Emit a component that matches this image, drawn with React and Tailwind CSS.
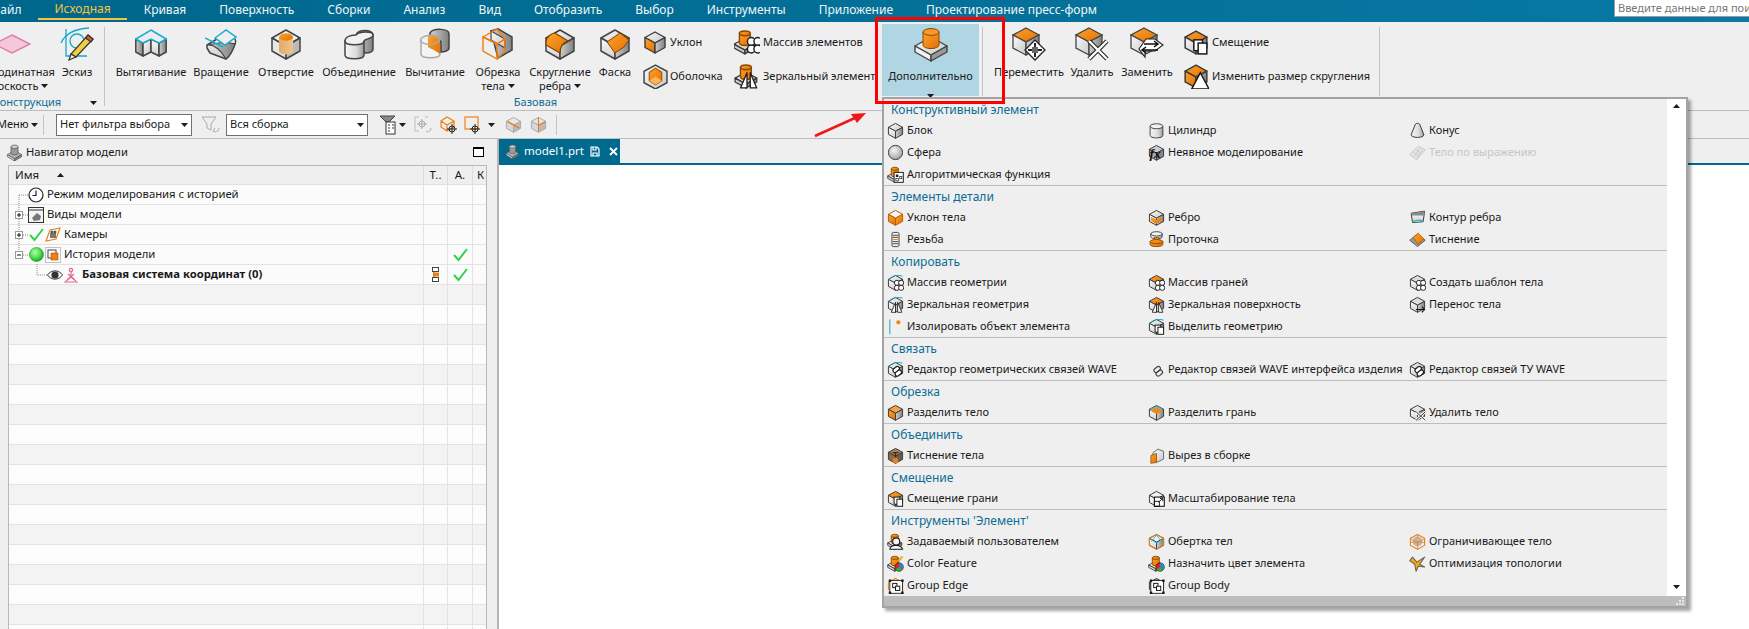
import React from 'react';

const STROKE = '#3c3c3c';

function Ico({ s = 16, w = 24, h = 24, children }) {
    return (
        <svg width={s} height={(s * h) / w} viewBox={`0 0 ${w} ${h}`} className="block shrink-0">
            {children}
        </svg>
    );
}

function Caret({ up = false }) {
    return (
        <svg width="7" height="4" viewBox="0 0 7 4" className="inline-block shrink-0">
            <polygon points={up ? '3.5,0 7,4 0,4' : '0,0 7,0 3.5,4'} fill="#1c1c1c" />
        </svg>
    );
}

// common drawing parts, all in a 24x24 grid
const Cube = ({ top = 'url(#gTop)', left = 'url(#gLeft)', right = 'url(#gRight)', stroke = STROKE, sw = 1.4 }) => (
    <g stroke={stroke} strokeWidth={sw} strokeLinejoin="round">
        <polygon points="12,2 22,7.5 12,13 2,7.5" fill={top} />
        <polygon points="2,7.5 12,13 12,23 2,17.5" fill={left} />
        <polygon points="22,7.5 12,13 12,23 22,17.5" fill={right} />
    </g>
);

const OrangeCube = () => <Cube top="url(#gOrange)" left="url(#gTop)" right="url(#gRight)" />;

const Cylinder = ({ fill = 'url(#gCyl)', x = 12, y = 5, rx = 8, ry = 3, h = 14, stroke = STROKE }) => (
    <g stroke={stroke} strokeWidth="1.3">
        <path d={`M${x - rx} ${y} V${y + h} A${rx} ${ry} 0 0 0 ${x + rx} ${y + h} V${y} Z`} fill={fill} />
        <ellipse cx={x} cy={y} rx={rx} ry={ry} fill={fill === 'url(#gCyl)' ? '#f2f2f2' : 'url(#gOrange)'} />
    </g>
);

const Plate = () => (
    <g stroke={STROKE} strokeWidth="1.2" strokeLinejoin="round">
        <polygon points="1,14 11,8.5 21,14 11,19.5" fill="url(#gTop)" />
        <polygon points="1,14 11,19.5 11,23 1,17.5" fill="#cfcfcf" />
        <polygon points="21,14 11,19.5 11,23 21,17.5" fill="#8f8f8f" />
    </g>
);

// grey part with a boss, used for the navigator and the model tab
const PartIcon = () => (
    <g stroke="#555" strokeWidth="1" strokeLinejoin="round">
        <polygon points="2,15 12,9 22,15 12,21" fill="#b5b5b5" />
        <polygon points="2,15 12,21 12,24 2,18" fill="#d8d8d8" />
        <polygon points="22,15 12,21 12,24 22,18" fill="#808080" />
        <path d="M7 4 V13 A5 2.5 0 0 0 17 13 V4 Z" fill="#9a9a9a" />
        <ellipse cx="12" cy="4" rx="5" ry="2.5" fill="#cfcfcf" />
    </g>
);

const Boss = () => (
    <>
        <Plate />
        <Cylinder fill="url(#gOrange)" x={11} y={4} rx={5} ry={2.2} h={9} stroke="#8a4a00" />
    </>
);

const Circles = () => (
    <g fill="#fff" stroke="#1c1c1c" strokeWidth="1.3">
        <circle cx="14" cy="12.5" r="3.6" />
        <circle cx="20" cy="12.5" r="3.6" />
        <circle cx="14" cy="19.5" r="3.6" />
        <circle cx="20" cy="19.5" r="3.6" />
    </g>
);

const Mirror = () => (
    <g fill="#fff" stroke="#1c1c1c" strokeWidth="1.2" strokeLinejoin="round">
        <polygon points="12,9 12,23 6,23" />
        <polygon points="15,9 15,23 21,23" />
    </g>
);

const Doc = () => (
    <g fill="#fff" stroke="#1c1c1c" strokeWidth="1.4">
        <rect x="10" y="10" width="8" height="10" />
        <rect x="14" y="13" width="8" height="10" />
    </g>
);

const Wave = () => <path d="M2 8 C8 2 15 1 22 3" fill="none" stroke="#17a9c9" strokeWidth="1.4" />;

const Chain = ({ color = '#1c1c1c', fill = '#fff' }) => (
    <g fill="none" stroke={color} strokeWidth="1.6">
        <rect x="8" y="9" width="10" height="6" rx="3" transform="rotate(-40 13 12)" fill={fill} />
        <rect x="11" y="14" width="10" height="6" rx="3" transform="rotate(-40 16 17)" fill={fill} />
    </g>
);

const Pie = () => (
    <g>
        <circle cx="17" cy="17" r="6" fill="#e02020" stroke="#222" strokeWidth="1" />
        <path d="M17 17 L17 11 A6 6 0 0 1 22 20 Z" fill="#2f7fe0" />
        <path d="M17 17 L22 20 A6 6 0 0 1 12 20 Z" fill="#27b13a" />
    </g>
);

const GroupBox = () => (
    <g>
        <rect x="4" y="5" width="18" height="18" fill="#fff" stroke="#1c1c1c" strokeWidth="1.2" />
        <g fill="#1c1c1c">
            <rect x="2.5" y="3.5" width="3.5" height="3.5" />
            <rect x="20" y="3.5" width="3.5" height="3.5" />
            <rect x="2.5" y="20.5" width="3.5" height="3.5" />
            <rect x="20" y="20.5" width="3.5" height="3.5" />
        </g>
        <rect x="8" y="9" width="6" height="6" fill="none" stroke="#1c1c1c" strokeWidth="1.4" />
        <rect x="12" y="13" width="6" height="6" fill="#fff" stroke="#1c1c1c" strokeWidth="1.4" />
    </g>
);

const WireHex = ({ color = '#ee7f12' }) => (
    <g fill="none" stroke={color} strokeWidth="1.5" strokeLinejoin="round">
        <polygon points="12,2 22,7.5 22,17.5 12,23 2,17.5 2,7.5" />
    </g>
);

const MENU_ICONS = {
    block: <Cube />,
    cylinder: <Cylinder y={6} rx={9} ry={3.5} h={13} />,
    cone: <path d="M9 3 C10 1.5 14 1.5 15 3 L21 18 C21 23 3 23 3 18 Z" fill="url(#gCyl)" stroke={STROKE} strokeWidth="1.4" />,
    sphere: <circle cx="12" cy="12" r="10" fill="url(#gBall)" stroke={STROKE} strokeWidth="1.4" />,
    fx: (
        <>
            <Cube top="#ccc" left="#aaa" right="#888" />
            <text x="2" y="20" fontFamily="Liberation Serif" fontStyle="italic" fontWeight="700" fontSize="19" fill="#111">fx</text>
        </>
    ),
    mesh: (
        <g fill="#e6e6e6" stroke="#c4c4c4" strokeWidth="1.2">
            <polygon points="13,3 23,8 11,22 1,15" />
            <path d="M9 7 L17 13 M5 11 L14 17 M16 5 L7 18 M20 7 L11 20" fill="none" />
        </g>
    ),
    algo: (
        <>
            <Boss />
            <rect x="10" y="9" width="13" height="14" fill="#fff" stroke="#111" strokeWidth="1.3" />
            <rect x="12.5" y="12" width="3.5" height="3.5" fill="#222" />
            <rect x="12.5" y="17.5" width="3.5" height="3.5" fill="none" stroke="#222" />
            <rect x="18" y="15" width="3" height="3" fill="none" stroke="#222" />
        </>
    ),
    draft: <Cube top="#f6f6f6" left="url(#gOrange)" right="url(#gOrange)" stroke="#b85f00" />,
    rib: (
        <>
            <Cube />
            <polygon points="4,11 12,15 20,11 20,16 12,21 4,16" fill="url(#gOrange)" />
        </>
    ),
    contour: (
        <>
            <polygon points="3,6 22,3 20,18 5,19" fill="url(#gLeft)" stroke={STROKE} strokeWidth="1.4" />
            <polygon points="3,6 22,3 21,9 5,9" fill="#8a8a8a" />
            <path d="M5 18 Q13 14 20 17" stroke="#2fb5d3" strokeWidth="1.8" fill="#cfeaf2" />
        </>
    ),
    thread: (
        <g stroke={STROKE} strokeWidth="1.3">
            <rect x="7" y="2" width="10" height="20" rx="2" fill="#f3f3f3" />
            <path d="M8 6 H16 M8 9 H16 M8 15 H16 M8 18 H16" />
            <path d="M8 12 H16" stroke="#ee7f12" />
        </g>
    ),
    groove: (
        <>
            <Cylinder y={4} rx={8} ry={3} h={4} />
            <rect x="9" y="9" width="6" height="5" fill="#f18a1d" stroke="#8a4a00" />
            <Cylinder fill="url(#gOrange)" y={15} rx={9} ry={3} h={4} stroke="#8a4a00" />
        </>
    ),
    emboss: (
        <>
            <polygon points="1,13 11,5 23,13 12,22" fill="#999" stroke={STROKE} />
            <polygon points="6,9 13,3 21,11 13,19" fill="url(#gOrange)" stroke="#a85400" />
        </>
    ),
    patGeom: (
        <>
            <Cube />
            <Wave />
            <Circles />
        </>
    ),
    patFace: (
        <>
            <OrangeCube />
            <Circles />
        </>
    ),
    patBody: (
        <>
            <Cube top="#ddd" />
            <Circles />
        </>
    ),
    mirGeom: (
        <>
            <Cube />
            <Wave />
            <Mirror />
        </>
    ),
    mirFace: (
        <>
            <OrangeCube />
            <Mirror />
        </>
    ),
    transfer: (
        <>
            <Cube top="#ddd" />
            <path d="M10 19 H22 M18 15 L22 19 L18 23" fill="none" stroke="#111" strokeWidth="1.6" />
        </>
    ),
    isolate: (
        <>
            <path d="M4 2 V23" stroke="#14a5c6" strokeWidth="1.4" />
            <circle cx="16" cy="6" r="3" fill="#f08a1d" />
        </>
    ),
    extract: (
        <>
            <Cube />
            <Wave />
            <Doc />
        </>
    ),
    waveGeom: (
        <>
            <Cube />
            <Wave />
            <Chain />
        </>
    ),
    waveIface: <Chain color="#444" fill="none" />,
    waveTu: (
        <>
            <Cube top="#ddd" />
            <Chain />
        </>
    ),
    split: <Cube top="#f6a341" left="url(#gOrange)" right="url(#gRight)" />,
    splitFace: (
        <>
            <Cube />
            <polygon points="3,9 12,4 21,9 12,14" fill="#f18a1d" />
            <path d="M3 8 L12 3 L21 8" fill="none" stroke="#25afd0" strokeWidth="1.6" />
        </>
    ),
    deleteBody: (
        <>
            <Cube />
            <path d="M10 11 L23 23 M23 11 L10 23" stroke="#fff" strokeWidth="3.6" />
            <path d="M10 11 L23 23 M23 11 L10 23" stroke="#222" strokeWidth="1.3" />
        </>
    ),
    emboss2: (
        <>
            <Cube top="#a5835f" left="#8a6a4a" right="#6f5a45" />
            <circle cx="12" cy="19" r="4" fill="#e8801b" />
            <path d="M8 8 H16 M12 8 V14" stroke="#3a2a1a" strokeWidth="1.6" />
        </>
    ),
    cut: (
        <>
            <polygon points="7,8 14,3 22,6 22,17 14,21 7,20" fill="url(#gTop)" stroke={STROKE} />
            <polygon points="4,12 12,9 12,22 4,23" fill="url(#gOrange)" stroke="#8a4a00" />
        </>
    ),
    offsetFace: (
        <>
            <OrangeCube />
            <Doc />
        </>
    ),
    scale: (
        <>
            <Cube top="#f2f2f2" left="#f2f2f2" right="#d6d6d6" />
            <rect x="9" y="10" width="14" height="13" fill="#fff" stroke="#111" strokeWidth="1.5" />
            <rect x="9" y="16" width="7" height="7" fill="none" stroke="#111" strokeWidth="1.3" />
            <path d="M15 17 L21 12 M17 12 H21 V16" fill="none" stroke="#111" strokeWidth="1.3" />
        </>
    ),
    user: (
        <>
            <Boss />
            <circle cx="13" cy="12" r="5" fill="#f4f4f4" stroke="#111" strokeWidth="1.5" />
            <path d="M4 23 C5 16 20 16 22 23 Z" fill="#fff" stroke="#111" strokeWidth="1.5" />
        </>
    ),
    wrap: (
        <>
            <Cube top="#f2f2f2" />
            <path d="M2 8 L12 14 L22 8 M12 3 L5 12 M12 3 L19 12" fill="none" stroke="#2fb5d3" strokeWidth="1.3" />
            <WireHex />
        </>
    ),
    bounding: (
        <>
            <circle cx="12" cy="12" r="7" fill="#b9b9b9" />
            <path d="M2 8 L12 13 L22 8 M12 13 V23 M2 13 H22 M12 2 V8" fill="none" stroke="#ee7f12" strokeWidth="1.1" />
            <WireHex />
        </>
    ),
    colorFeat: (
        <>
            <Boss />
            <path d="M16 9 L22 2" stroke="#e2b41f" strokeWidth="3" />
            <Pie />
        </>
    ),
    colorAssign: (
        <>
            <Boss />
            <Pie />
        </>
    ),
    topo: <path d="M5 3 L11 10 L22 3 L15 13 L22 17 L13 16 L10 23 L8 13 L1 8 Z" fill="#f5a816" stroke="#665" strokeWidth="1.5" strokeLinejoin="round" />,
    groupEdge: (
        <>
            <WireHex />
            <GroupBox />
        </>
    ),
    groupBody: (
        <>
            <Cube top="#d58a2e" left="#999" right="#777" />
            <GroupBox />
        </>
    ),
};

const MENU = [
    {
        title: 'Конструктивный элемент',
        rows: [
            [['block', 'Блок'], ['cylinder', 'Цилиндр'], ['cone', 'Конус']],
            [['sphere', 'Сфера'], ['fx', 'Неявное моделирование'], ['mesh', 'Тело по выражению', true]],
            [['algo', 'Алгоритмическая функция']],
        ],
    },
    {
        title: 'Элементы детали',
        rows: [
            [['draft', 'Уклон тела'], ['rib', 'Ребро'], ['contour', 'Контур ребра']],
            [['thread', 'Резьба'], ['groove', 'Проточка'], ['emboss', 'Тиснение']],
        ],
    },
    {
        title: 'Копировать',
        rows: [
            [['patGeom', 'Массив геометрии'], ['patFace', 'Массив граней'], ['patBody', 'Создать шаблон тела']],
            [['mirGeom', 'Зеркальная геометрия'], ['mirFace', 'Зеркальная поверхность'], ['transfer', 'Перенос тела']],
            [['isolate', 'Изолировать объект элемента'], ['extract', 'Выделить геометрию']],
        ],
    },
    {
        title: 'Связать',
        rows: [[['waveGeom', 'Редактор геометрических связей WAVE'], ['waveIface', 'Редактор связей WAVE интерфейса изделия'], ['waveTu', 'Редактор связей ТУ WAVE']]],
    },
    {
        title: 'Обрезка',
        rows: [[['split', 'Разделить тело'], ['splitFace', 'Разделить грань'], ['deleteBody', 'Удалить тело']]],
    },
    {
        title: 'Объединить',
        rows: [[['emboss2', 'Тиснение тела'], ['cut', 'Вырез в сборке']]],
    },
    {
        title: 'Смещение',
        rows: [[['offsetFace', 'Смещение грани'], ['scale', 'Масштабирование тела']]],
    },
    {
        title: "Инструменты 'Элемент'",
        rows: [
            [['user', 'Задаваемый пользователем'], ['wrap', 'Обертка тел'], ['bounding', 'Ограничивающее тело']],
            [['colorFeat', 'Color Feature'], ['colorAssign', 'Назначить цвет элемента'], ['topo', 'Оптимизация топологии']],
            [['groupEdge', 'Group Edge'], ['groupBody', 'Group Body']],
        ],
    },
];

// big ribbon pictures, 32x32
const Big = ({ children }) => <Ico s={32} w={32} h={32}>{children}</Ico>;

const HexBig = ({ top = 'url(#gTop)', left = 'url(#gLeft)', right = 'url(#gRight)' }) => (
    <g stroke="#444" strokeWidth="1.5" strokeLinejoin="round">
        <polygon points="16,2 30,10 16,18 2,10" fill={top} />
        <polygon points="2,10 16,18 16,31 2,23" fill={left} />
        <polygon points="30,10 16,18 16,31 30,23" fill={right} />
    </g>
);

const PlaneIcon = () => (
    <div className="mr-[10px]">
        <Ico s={38} w={38} h={20}>
            <polygon points="19,1 37,10 19,19 1,10" fill="#f6c6da" stroke="#df7fa3" strokeWidth="1.5" />
        </Ico>
    </div>
);

const SketchIcon = () => (
    <Ico s={34} w={34} h={34}>
        <path d="M1 16 C5 7 14 2 29 1" fill="none" stroke="#16a8cb" strokeWidth="1.3" />
        <path d="M6 2 V29 H27" fill="none" stroke="#16a8cb" strokeWidth="1.3" />
        <circle cx="17" cy="14" r="7" fill="none" stroke="#16a8cb" strokeWidth="1.3" />
        <polygon points="28,8 33,12 16,30 11,27" fill="#f2cf3c" stroke="#333" strokeWidth="1.2" />
        <polygon points="28,8 33,12 31,15 25.5,11" fill="#d9534f" stroke="#333" strokeWidth="1.2" />
        <polygon points="11,27 16,30 9,33" fill="#eee" stroke="#333" strokeWidth="1.2" />
    </Ico>
);

const ExtrudeIcon = () => (
    <Big>
        <g stroke="#444" strokeWidth="1.5" strokeLinejoin="round">
            <polygon points="0.8,11 8,15 8,28 0.8,24" fill="url(#gRight)" />
            <polygon points="8,15 16,11 16,24 8,28" fill="url(#gTop)" />
            <polygon points="16,11 24,15 24,28 16,24" fill="url(#gLeft)" />
            <polygon points="24,15 31.2,11 31.2,24 24,28" fill="url(#gRight)" />
        </g>
        <polygon points="16,2 31.2,11 24,15 16,11 8,15 0.8,11" fill="#ededed" stroke="#17aed0" strokeWidth="1.5" />
    </Big>
);

const RevolveIcon = () => (
    <Big>
        <path d="M2 17 L22 5 C29 9 32 11 30 16 C28 22 26 27 21 31 L5 25 L2 20 Z" fill="url(#gLeft)" stroke="#444" strokeWidth="1.5" strokeLinejoin="round" />
        <path d="M2 17 Q12 16 21 31 C26 27 28 22 30 16 L20 14 Z" fill="url(#gRight)" stroke="#444" strokeWidth="1.2" />
        <polygon points="10,10 21,2 31,9 20,17" fill="#eee" stroke="#17aed0" strokeWidth="1.5" />
        <path d="M0 10 L18 19" stroke="#17aed0" strokeWidth="1.5" />
    </Big>
);

const HoleIcon = () => (
    <Big>
        <HexBig top="#f4f4f4" left="#e7e7e7" right="#b9b9b9" />
        <path d="M9 9 V23 A7 3.5 0 0 0 23 23 V9 Z" fill="url(#gHole)" />
        <ellipse cx="16" cy="9" rx="7" ry="3.7" fill="url(#gOrange)" />
    </Big>
);

const UniteIcon = () => (
    <Big>
        <path d="M13 7 C15 1 30 1 30 7 V21 C30 24 26 25 22 25 L13 15 Z" fill="url(#gRight)" stroke="#444" strokeWidth="1.5" />
        <path d="M2 13 V27 C2 32 21 32 21 27 V13 Z" fill="url(#gCyl)" stroke="#444" strokeWidth="1.5" />
        <path d="M2 13 C2 8 10 7 13 7 C16 3 30 3 30 7 C30 11 21 11 21 13 C21 18 2 18 2 13 Z" fill="#f1f1f1" stroke="#444" strokeWidth="1.5" />
    </Big>
);

const SubtractIcon = () => (
    <Big>
        <path d="M2 12 V26 C2 31 21 31 21 26 V12" fill="#f4f4f4" stroke="#aaa" strokeWidth="1.5" />
        <path d="M11 5 C14 0 30 0 30 6 V20 C30 23 25 24 22 24 V14 C19 9 14 9 11 9 Z" fill="url(#gRight)" stroke="#444" strokeWidth="1.5" />
        <path d="M9 8 C14 5 19 8 21 13 V26 C14 21 10 20 9 19 Z" fill="url(#gOrange)" />
        <ellipse cx="11" cy="12" rx="9.5" ry="4.5" fill="none" stroke="#aaa" strokeWidth="1.5" />
    </Big>
);

const TrimIcon = () => (
    <Big>
        <polygon points="9,3 16,0.8 30,9 30,22 16,30" fill="url(#gRight)" stroke="#444" strokeWidth="1.5" />
        <polygon points="9,3 23,11 23,20 9,12" fill="url(#gTop)" stroke="#444" strokeWidth="1.2" />
        <g fill="none" stroke="#ee7f12" strokeWidth="1.4">
            <polygon points="1,9 15,1 23,11 15,16" />
            <polygon points="1,9 15,16 15,31 1,23" />
            <path d="M15 16 L23 11 V23 L15 31" />
        </g>
    </Big>
);

const BlendIcon = () => (
    <Big>
        <HexBig />
        <path d="M2 14 C2 9 8 5 11 5 L24 13 C19 14 16 19 16 25 L2 17 Z" fill="url(#gOrange)" stroke="#7a4300" strokeWidth="1.2" />
    </Big>
);

const ChamferIcon = () => (
    <Big>
        <HexBig />
        <polygon points="21,5 30,12 25,19 16,25 8,14" fill="url(#gOrange)" stroke="#7a4300" strokeWidth="1" />
    </Big>
);

const MoveIcon = () => (
    <Ico s={34} w={34} h={34}>
        <polygon points="14,1 27,8 14,15 1,8" fill="url(#gOrange)" stroke="#444" strokeWidth="1.3" />
        <polygon points="1,8 14,15 14,28 1,21" fill="url(#gTop)" stroke="#444" strokeWidth="1.3" />
        <polygon points="27,8 14,15 14,28 27,21" fill="url(#gRight)" stroke="#444" strokeWidth="1.3" />
        <polygon points="23,13 33,23 23,33 13,23" fill="#fff" stroke="#222" strokeWidth="1.3" />
        <path d="M23 16 V30 M16 23 H30" stroke="#222" strokeWidth="2" />
        <rect x="20" y="20" width="6" height="6" fill="#666" />
    </Ico>
);

const DeleteIcon = () => (
    <Ico s={34} w={34} h={34}>
        <polygon points="14,1 27,8 14,15 1,8" fill="url(#gOrange)" stroke="#444" strokeWidth="1.3" />
        <polygon points="1,8 14,15 14,28 1,21" fill="url(#gTop)" stroke="#444" strokeWidth="1.3" />
        <polygon points="27,8 14,15 14,28 27,21" fill="url(#gRight)" stroke="#444" strokeWidth="1.3" />
        <path d="M14 14 L32 32 M32 14 L14 32" stroke="#222" strokeWidth="4.5" />
        <path d="M14 14 L32 32 M32 14 L14 32" stroke="#fff" strokeWidth="2.4" />
    </Ico>
);

const ReplaceIcon = () => (
    <Ico s={34} w={34} h={34}>
        <polygon points="14,1 27,8 14,15 1,8" fill="url(#gOrange)" stroke="#444" strokeWidth="1.3" />
        <polygon points="1,8 14,15 14,28 1,21" fill="url(#gTop)" stroke="#444" strokeWidth="1.3" />
        <polygon points="27,8 14,15 14,28 27,21" fill="url(#gRight)" stroke="#444" strokeWidth="1.3" />
        <polygon points="9,22 16,12 25,12 33,18 25,24 15,24 15,30" fill="#fff" stroke="#222" strokeWidth="1.1" />
        <path d="M14 17 H28 M24 14 L28 17 L24 20 M28 23 H12 M16 20 L12 23 L16 26" fill="none" stroke="#111" strokeWidth="1.5" />
    </Ico>
);

const MoreIcon = () => (
    <Ico s={34} w={34} h={34}>
        <g stroke="#444" strokeWidth="1.4" strokeLinejoin="round">
            <polygon points="1,18 17,9 33,18 17,27" fill="url(#gTop)" />
            <polygon points="1,18 17,27 17,33 1,24" fill="#f2f2f2" />
            <polygon points="33,18 17,27 17,33 33,24" fill="#999" />
        </g>
        <path d="M9 4 V17 A8 3.6 0 0 0 25 17 V4 Z" fill="url(#gOrange)" stroke="#8a4a00" strokeWidth="1" />
        <ellipse cx="17" cy="4" rx="8" ry="3.4" fill="#f59a2a" stroke="#8a4a00" strokeWidth="1" />
    </Ico>
);

const SmallDraft = () => (
    <Ico s={24}>
        <Cube left="url(#gOrange)" />
    </Ico>
);

const SmallShell = () => (
    <Ico s={25}>
        <polygon points="12,1 23,7 23,18 12,24 1,18 1,7" fill="url(#gTop)" stroke="#444" strokeWidth="1.4" />
        <polygon points="6,8 12,4 18,8 18,16 12,20 6,16" fill="url(#gOrange)" stroke="#9a5200" strokeWidth="1" />
        <polygon points="6,16 12,12 18,16 12,20" fill="#ffb457" />
    </Ico>
);

const PatternSmall = () => (
    <Ico s={26}>
        <g transform="translate(-1 0)"><Boss /></g>
        <g transform="translate(2 -1)"><Circles /></g>
    </Ico>
);

const MirrorSmall = () => (
    <Ico s={26}>
        <Boss />
        <Mirror />
    </Ico>
);

const OffsetSmall = () => (
    <Ico s={26}>
        <OrangeCube />
        <Doc />
    </Ico>
);

const ResizeBlend = () => (
    <Ico s={26}>
        <Cube top="url(#gOrange)" left="url(#gOrange)" />
        <polygon points="16,9 24,24 8,24" fill="#fff" stroke="#111" strokeWidth="1.3" />
    </Ico>
);

const FONT = "font-['Noto_Sans','Liberation_Sans',sans-serif]";

function LargeButton({ className, icon, label, second, caret = false }) {
    return (
        <div className={`flex flex-col items-center shrink-0 text-[11px] leading-[14px] whitespace-nowrap text-[#1a1a1a] ${className}`}>
            <div className="h-[32px] mt-[6px] mb-[5px] flex items-center justify-center">{icon}</div>
            <div className="text-center">{label}</div>
            {second && (
                <div className="flex items-center gap-[3px]">
                    {second}
                    {caret && <Caret />}
                </div>
            )}
        </div>
    );
}

function SmallButton({ icon, label, iconWidth }) {
    return (
        <div className="h-[26px] flex items-center whitespace-nowrap text-[11px] text-[#1a1a1a]">
            <div className={`flex items-center ${iconWidth}`}>{icon}</div>
            {label}
        </div>
    );
}

function Sep({ className }) {
    return <div className={`w-px shrink-0 bg-[#c4c4c4] self-start mt-[5px] ${className}`}></div>;
}

function MenuCell({ item }) {
    const [icon, label, disabled] = item;
    return (
        <div className={`flex items-center gap-[3px] whitespace-nowrap ${disabled ? 'text-[#c6c6c6]' : 'text-[#1a1a1a]'}`}>
            <Ico s={17}>{MENU_ICONS[icon]}</Ico>
            <span>{label}</span>
        </div>
    );
}

function FeatureMenu() {
    return (
        <div className="absolute left-[882px] top-[97px] w-[806px] h-[511px] border-2 border-[#a3a3a3] shadow-[3px_3px_3px_rgba(0,0,0,0.35)] flex flex-col bg-[#efefef] text-[11px]">
            <div className="flex-1 flex min-h-0">
                <div className="w-[783px] shrink-0">
                    {MENU.map((section, i) => (
                        <div key={section.title} className={i > 0 ? 'border-t border-[#bdbdbd]' : ''}>
                            <div className="h-[20px] pl-[7px] pt-[1px] flex items-center text-[12px] text-[#0b6d94]">{section.title}</div>
                            {section.rows.map((row, r) => (
                                <div key={r} className="h-[22px] pl-[3px] grid grid-cols-[261px_261px_1fr] items-center">
                                    {row.map((item) => (
                                        <MenuCell key={item[1]} item={item} />
                                    ))}
                                </div>
                            ))}
                        </div>
                    ))}
                </div>
                <div className="flex-1 bg-white flex flex-col justify-between items-center pt-[5px] pb-[7px]">
                    <Caret up />
                    <Caret />
                </div>
            </div>
            <div className="h-[10px] bg-[#bdbdbd] shrink-0 flex justify-end items-end pr-[2px] pb-[1px]">
                <svg width="8" height="8" viewBox="0 0 8 8">
                    <path d="M6 0h2v2H6zM3 3h2v2H3zM6 3h2v2H6zM0 6h2v2H0zM3 6h2v2H3zM6 6h2v2H6z" fill="#e8e8e8" />
                </svg>
            </div>
        </div>
    );
}

const Check = ({ s = 15 }) => (
    <svg width={s} height={s} viewBox="0 0 15 15" className="block shrink-0">
        <path d="M1 8 L5.5 13 L14 2" fill="none" stroke="#2fd24a" strokeWidth="2" />
    </svg>
);

const TREE_ROWS = [
    {
        pad: 'pl-[19px]',
        icons: (
            <svg width="16" height="16" viewBox="0 0 16 16" className="block mr-[3px]">
                <circle cx="8" cy="8" r="7" fill="#fff" stroke="#222" strokeWidth="1.2" />
                <path d="M8 3.5 V8.5 H4.5" fill="none" stroke="#222" strokeWidth="1.2" />
            </svg>
        ),
        label: 'Режим моделирования с историей',
    },
    {
        pad: 'pl-[19px]',
        icons: (
            <svg width="16" height="16" viewBox="0 0 16 16" className="block mr-[3px]">
                <rect x="0.5" y="0.5" width="15" height="15" fill="#f5f5f5" stroke="#333" />
                <path d="M0 3 H16" stroke="#333" />
                <polygon points="4,11 9,6 13,9 12,13 6,14" fill="#777" />
            </svg>
        ),
        label: 'Виды модели',
    },
    {
        pad: 'pl-[20px]',
        icons: (
            <>
                <Check />
                <svg width="16" height="16" viewBox="0 0 16 16" className="block ml-px mr-[3px]">
                    <polygon points="1,14 5,3 15,1 11,12" fill="none" stroke="#ee7f12" strokeWidth="1.2" />
                    <rect x="5" y="6" width="6" height="5" fill="#777" />
                    <circle cx="7" cy="5" r="1.5" fill="#555" />
                    <circle cx="10" cy="5" r="1.5" fill="#555" />
                </svg>
            </>
        ),
        label: 'Камеры',
    },
    {
        pad: 'pl-[20px]',
        icons: (
            <>
                <svg width="15" height="15" viewBox="0 0 15 15" className="block">
                    <circle cx="7.5" cy="7.5" r="7" fill="url(#gGreen)" stroke="#2a8a2a" strokeWidth="0.6" />
                </svg>
                <svg width="16" height="16" viewBox="0 0 16 16" className="block ml-px mr-[3px]">
                    <rect x="0.5" y="0.5" width="15" height="15" fill="none" stroke="#888" strokeDasharray="1 1" />
                    <rect x="3" y="3" width="8" height="8" fill="#fff" stroke="#444" />
                    <rect x="6" y="6" width="7" height="7" fill="#ee7f12" stroke="#a85400" strokeWidth="0.6" />
                </svg>
            </>
        ),
        label: 'История модели',
        done: true,
    },
    {
        pad: 'pl-[38px]',
        icons: (
            <>
                <svg width="16" height="12" viewBox="0 0 16 12" className="block">
                    <path d="M0.5 6 C4 0.5 12 0.5 15.5 6 C12 11.5 4 11.5 0.5 6 Z" fill="#fff" stroke="#333" />
                    <circle cx="8" cy="6" r="3.6" fill="#333" />
                </svg>
                <svg width="16" height="16" viewBox="0 0 16 16" className="block mr-[3px]">
                    <g fill="none" stroke="#e0648f" strokeWidth="1.2">
                        <circle cx="8" cy="3" r="1.6" />
                        <path d="M8 5 V10 M8 10 L3 14 M8 10 L13 14 M1 15 H15" />
                        <path d="M5 7 L11 12 M11 7 L5 12" />
                    </g>
                </svg>
            </>
        ),
        label: 'Базовая система координат (0)',
        bold: true,
        done: true,
        owner: true,
    },
];

const EMPTY_ROWS = Array.from({ length: 18 }, (_, i) => i + 5);

function TreeGrid({ bg, children, owner, done }) {
    return (
        <div className={`h-[20px] flex border-b border-[#e3e3e3] text-[11.3px] text-[#1a1a1a] ${bg}`}>
            <div className="w-[415px] flex items-center border-r border-[#e3e3e3] whitespace-nowrap">{children}</div>
            <div className="w-[24px] flex items-center justify-center border-r border-[#e3e3e3]">
                {owner && (
                    <svg width="8" height="15" viewBox="0 0 8 15" className="block">
                        <path d="M2 2 V13 M2 7.5 H4" stroke="#444" fill="none" />
                        <rect x="0.5" y="0.5" width="6" height="4" fill="#fff" stroke="#444" />
                        <rect x="1" y="5.5" width="6" height="4" fill="#ee7f12" />
                        <rect x="0.5" y="10.5" width="6" height="4" fill="#fff" stroke="#444" />
                    </svg>
                )}
            </div>
            <div className="w-[25px] flex items-center justify-center border-r border-[#e3e3e3]">{done && <Check />}</div>
            <div className="flex-1"></div>
        </div>
    );
}

function Navigator() {
    return (
        <div className="w-[497px] shrink-0 flex flex-col bg-[#efefef] text-[#1a1a1a]">
            <div className="h-[26px] shrink-0 flex items-center pl-[6px] pr-[13px] text-[11.2px]">
                <Ico s={17}><PartIcon /></Ico>
                <span className="ml-[3px] flex-1">Навигатор модели</span>
                <div className="w-[11px] h-[10px] border border-black border-t-2 bg-white"></div>
            </div>
            <div className="ml-[8px] w-[479px] flex-1 min-h-0 overflow-hidden border border-[#b8b8b8] border-b-0">
                <div className="h-[19px] flex text-[11.5px] border-b border-[#e0e0e0] bg-[#efefef]">
                    <div className="w-[415px] flex items-center pl-[6px] gap-[18px] border-r border-[#dcdcdc]">
                        Имя
                        <Caret up />
                    </div>
                    <div className="w-[24px] flex items-center justify-center border-r border-[#dcdcdc]">Т..</div>
                    <div className="w-[25px] flex items-center justify-center border-r border-[#dcdcdc]">А.</div>
                    <div className="flex-1 pl-[4px] flex items-center overflow-hidden">К</div>
                </div>
                <div className="relative">
                    {TREE_ROWS.map((row) => (
                        <TreeGrid key={row.label} bg="bg-[#fbfbfb]" owner={row.owner} done={row.done}>
                            <div className={`flex items-center ${row.pad} ${row.bold ? 'font-bold' : ''}`}>
                                {row.icons}
                                <span>{row.label}</span>
                            </div>
                        </TreeGrid>
                    ))}
                    {EMPTY_ROWS.map((i) => (
                        <TreeGrid key={i} bg={i % 2 === 0 ? 'bg-[#fcfcfc]' : 'bg-[#f3f3f3]'} />
                    ))}
                    <svg width="44" height="96" viewBox="0 0 44 96" className="absolute left-0 top-0">
                        <path d="M10 10 V66 M10 10 H19 M14 30 H19 M14 50 H20 M14 70 H20 M28 79 V90 H38" fill="none" stroke="#8c8c8c" strokeDasharray="1 1" />
                        {[30, 50, 70].map((y) => (
                            <g key={y}>
                                <rect x="6.5" y={y - 3.5} width="7" height="7" fill="#fff" stroke="#999" />
                                <path d={y === 70 ? 'M8 70 H12' : `M8 ${y} H12 M10 ${y - 2} V${y + 2}`} stroke="#111" />
                            </g>
                        ))}
                    </svg>
                </div>
            </div>
        </div>
    );
}

const TABS = ['Файл', 'Исходная', 'Кривая', 'Поверхность', 'Сборки', 'Анализ', 'Вид', 'Отобразить', 'Выбор', 'Инструменты', 'Приложение', 'Проектирование пресс-форм'];

export default function App() {
    return (
        <div className={`relative w-[1749px] h-[629px] overflow-hidden flex flex-col bg-white ${FONT}`}>
            <svg width="0" height="0" className="absolute">
                <defs>
                    <linearGradient id="gTop" x1="0" y1="0" x2="1" y2="1"><stop offset="0" stopColor="#fafafa" /><stop offset="1" stopColor="#c9c9c9" /></linearGradient>
                    <linearGradient id="gLeft" x1="0" y1="0" x2="0" y2="1"><stop offset="0" stopColor="#fdfdfd" /><stop offset="1" stopColor="#cfcfcf" /></linearGradient>
                    <linearGradient id="gRight" x1="0" y1="0" x2="1" y2="0"><stop offset="0" stopColor="#d0d0d0" /><stop offset="1" stopColor="#808080" /></linearGradient>
                    <linearGradient id="gCyl" x1="0" y1="0" x2="1" y2="0"><stop offset="0" stopColor="#f6f6f6" /><stop offset="0.6" stopColor="#dcdcdc" /><stop offset="1" stopColor="#9a9a9a" /></linearGradient>
                    <linearGradient id="gOrange" x1="0" y1="0" x2="1" y2="1"><stop offset="0" stopColor="#fca42e" /><stop offset="1" stopColor="#e66f00" /></linearGradient>
                    <linearGradient id="gHole" x1="0" y1="0" x2="1" y2="0"><stop offset="0" stopColor="#e4a966" /><stop offset="1" stopColor="#efc48f" /></linearGradient>
                    <radialGradient id="gBall" cx="0.4" cy="0.35" r="0.7"><stop offset="0" stopColor="#f8f8f8" /><stop offset="1" stopColor="#9c9c9c" /></radialGradient>
                    <radialGradient id="gGreen" cx="0.4" cy="0.35" r="0.7"><stop offset="0" stopColor="#b8ffb0" /><stop offset="0.6" stopColor="#3fdc47" /><stop offset="1" stopColor="#169c24" /></radialGradient>
                </defs>
            </svg>

            <div className="h-[22px] shrink-0 flex bg-linear-to-r from-[#00678c] to-[#0779a4] text-[12px] text-[#f0f6f9]">
                <div className="flex -ml-[26px]">
                    {TABS.map((tab) => (
                        <div
                            key={tab}
                            className={`h-[20px] px-[16.5px] flex items-center whitespace-nowrap ${tab === 'Исходная' ? 'text-[#f5c33c] border-b-2 border-[#f5c33c]' : ''}`}
                        >
                            {tab}
                        </div>
                    ))}
                </div>
                <div className="ml-auto w-[135px] h-[17px] overflow-hidden bg-white border-l border-b border-[#9a9a9a] pl-[3px] text-[11px] leading-[16px] text-[#777] whitespace-nowrap">
                    Введите данные для поиска
                </div>
            </div>

            <div className="h-[89px] shrink-0 flex bg-[#efefef] border-b border-[#bdbdbd]">
                <div className="w-[123px] -ml-[19px] shrink-0 flex flex-col">
                    <div className="h-[73px] flex">
                        <LargeButton className="w-[71px]" icon={<PlaneIcon />} label="Координатная" second="плоскость" caret />
                        <LargeButton className="w-[30px] ml-[10px]" icon={<SketchIcon />} label="Эскиз" />
                    </div>
                    <div className="h-[15px] flex items-center justify-between pl-[12px] pr-[7px] text-[11px] text-[#0b6d94]">
                        Конструкция
                        <Caret />
                    </div>
                </div>
                <Sep className="h-[79px]" />
                <div className="w-[877px] shrink-0 flex flex-col">
                    <div className="h-[73px] flex">
                        <LargeButton className="w-[70px] ml-[11px]" icon={<ExtrudeIcon />} label="Вытягивание" />
                        <LargeButton className="w-[60px] ml-[5px]" icon={<RevolveIcon />} label="Вращение" />
                        <LargeButton className="w-[60px] ml-[5px]" icon={<HoleIcon />} label="Отверстие" />
                        <LargeButton className="w-[76px] ml-[5px]" icon={<UniteIcon />} label="Объединение" />
                        <LargeButton className="w-[64px] ml-[6px]" icon={<SubtractIcon />} label="Вычитание" />
                        <LargeButton className="w-[50px] ml-[6px]" icon={<TrimIcon />} label="Обрезка" second="тела" caret />
                        <LargeButton className="w-[64px] ml-[5px]" icon={<BlendIcon />} label="Скругление" second="ребра" caret />
                        <LargeButton className="w-[36px] ml-[5px]" icon={<ChamferIcon />} label="Фаска" />
                        <div className="w-[87px] ml-[10px] mt-[7px] flex flex-col gap-[8px]">
                            <SmallButton icon={<SmallDraft />} label="Уклон" iconWidth="w-[27px]" />
                            <SmallButton icon={<SmallShell />} label="Оболочка" iconWidth="w-[27px]" />
                        </div>
                        <div className="w-[144px] ml-[4px] mt-[7px] flex flex-col gap-[8px]">
                            <SmallButton icon={<PatternSmall />} label="Массив элементов" iconWidth="w-[29px]" />
                            <SmallButton icon={<MirrorSmall />} label="Зеркальный элемент" iconWidth="w-[29px]" />
                        </div>
                        <div className="w-[97px] ml-[4px] h-[72px] mt-[2px] bg-[#afd6e2] flex flex-col items-center text-[11px] text-[#1a1a1a]">
                            <div className="mt-[4px] mb-[7px]"><MoreIcon /></div>
                            <div className="leading-[14px]">Дополнительно</div>
                            <div className="mt-[4px]"><Caret /></div>
                        </div>
                    </div>
                    <div className="h-[15px] flex items-center justify-center pr-[16px] text-[11px] text-[#0b6d94]">Базовая</div>
                </div>
                <Sep className="h-[69px]" />
                <LargeButton className="w-[68px] ml-[12px]" icon={<MoveIcon />} label="Переместить" />
                <LargeButton className="w-[50px] ml-[4px]" icon={<DeleteIcon />} label="Удалить" />
                <LargeButton className="w-[52px] ml-[4px]" icon={<ReplaceIcon />} label="Заменить" />
                <div className="w-[190px] ml-[10px] mt-[7px] flex flex-col gap-[8px]">
                    <SmallButton icon={<OffsetSmall />} label="Смещение" iconWidth="w-[29px]" />
                    <SmallButton icon={<ResizeBlend />} label="Изменить размер скругления" iconWidth="w-[29px]" />
                </div>
                <Sep className="h-[69px] ml-[6px]" />
            </div>

            <div className="h-[28px] shrink-0 flex items-center bg-[#efefef] border-b border-[#bdbdbd] text-[11px] text-[#1a1a1a]">
                <div className="-ml-[3px] w-[46px] shrink-0 flex items-center gap-[2px]">
                    Меню
                    <Caret />
                </div>
                <div className="w-px h-[20px] bg-[#c4c4c4]"></div>
                <div className="w-[136px] h-[22px] ml-[12px] bg-white border border-[#707070] flex items-center justify-between pl-[3px] pr-[3px] whitespace-nowrap">
                    Нет фильтра выбора
                    <Caret />
                </div>
                <svg width="20" height="18" viewBox="0 0 20 18" className="ml-[9px] block">
                    <path d="M1 1 H15 L10 8 V14 L6 12 V8 Z" fill="none" stroke="#aaa" />
                    <path d="M12 15 C15 17 18 15 18 12 M12 15 L14 12" fill="none" stroke="#aaa" />
                </svg>
                <div className="w-[142px] h-[22px] ml-[5px] bg-white border border-[#707070] flex items-center justify-between pl-[3px] pr-[3px]">
                    Вся сборка
                    <Caret />
                </div>
                <svg width="18" height="20" viewBox="0 0 18 20" className="ml-[11px] block">
                    <path d="M1 1 H16 L10 7 H7 Z" fill="#888" stroke="#444" />
                    <rect x="7" y="7" width="9" height="12" fill="#fff" stroke="#333" />
                    <path d="M9 10 H11 M13 10 H15 M9 13 H11 M13 13 H15 M9 16 H11" stroke="#333" />
                </svg>
                <div className="ml-[2px] flex"><Caret /></div>
                <svg width="18" height="18" viewBox="0 0 18 18" className="ml-[8px] block">
                    <path d="M5 1 H1 V15 H5 M11 1 H14" fill="none" stroke="#bbb" />
                    <circle cx="8" cy="8" r="3" fill="none" stroke="#aaa" />
                    <path d="M8 3 V13 M3 8 H13" stroke="#aaa" />
                    <path d="M12 15 C14 17 17 15 17 12" fill="none" stroke="#aaa" />
                </svg>
                <svg width="18" height="18" viewBox="0 0 18 18" className="ml-[8px] block">
                    <path d="M1 5 L7 1 L14 5 V11 L7 15 L1 11 Z M1 5 L7 9 L14 5 M7 9 V15" fill="none" stroke="#ee7f12" strokeWidth="1.2" />
                    <circle cx="12" cy="13" r="3" fill="none" stroke="#222" />
                    <path d="M12 8 V18 M7 13 H17" stroke="#222" />
                </svg>
                <svg width="18" height="18" viewBox="0 0 18 18" className="ml-[6px] block">
                    <rect x="1" y="1" width="13" height="12" fill="none" stroke="#ee7f12" strokeWidth="1.2" />
                    <circle cx="11" cy="13" r="3" fill="none" stroke="#222" />
                    <path d="M11 8 V18 M6 13 H16" stroke="#222" />
                </svg>
                <div className="ml-[6px] flex"><Caret /></div>
                <svg width="17" height="17" viewBox="0 0 24 24" className="ml-[10px] block">
                    <Cube top="#e6e6e6" left="#d8d8d8" right="#bcbcbc" stroke="#aaa" />
                    <path d="M4 8 L20 17" stroke="#ee7f12" strokeWidth="2" />
                </svg>
                <svg width="17" height="17" viewBox="0 0 24 24" className="ml-[8px] block">
                    <Cube top="#e6e6e6" left="#d8d8d8" right="#bcbcbc" stroke="#aaa" />
                    <path d="M12 2 V22 M12 13 L22 8" stroke="#ee7f12" strokeWidth="1.6" />
                </svg>
                <div className="w-px h-[20px] bg-[#c4c4c4] ml-[9px]"></div>
            </div>

            <div className="flex-1 min-h-0 flex">
                <Navigator />
                <div className="flex-1 min-w-0 flex flex-col border-l-2 border-[#b4b4b4]">
                    <div className="h-[26px] shrink-0 flex bg-[#efefef] border-b-2 border-[#006a8e]">
                        <div className="w-[121px] bg-[#006a8e] flex items-center pl-[6px] text-white text-[11.5px]">
                            <Ico s={15}><PartIcon /></Ico>
                            <span className="ml-[4px]">model1.prt</span>
                            <svg width="10" height="11" viewBox="0 0 10 11" className="ml-[6px] block">
                                <path d="M1 1 H7 L9 3 V10 H1 Z M3 1 V4 H6 V1 M3 10 V7 H7 V10" fill="none" stroke="#fff" strokeWidth="1.2" />
                            </svg>
                            <svg width="9" height="9" viewBox="0 0 9 9" className="ml-[9px] block">
                                <path d="M1 1 L8 8 M8 1 L1 8" stroke="#fff" strokeWidth="1.8" />
                            </svg>
                        </div>
                    </div>
                    <div className="flex-1 bg-white"></div>
                </div>
            </div>

            <FeatureMenu />

            <div className="absolute left-[875px] top-[17px] w-[130px] h-[87px] border-[3px] border-[#ff0000]"></div>
            <svg width="60" height="32" viewBox="0 0 60 32" className="absolute left-[810px] top-[108px]">
                <path d="M5 28 L46 9.5" stroke="#f01818" strokeWidth="2.6" />
                <polygon points="56,5 41,6 47,15" fill="#f01818" />
            </svg>
        </div>
    );
}
